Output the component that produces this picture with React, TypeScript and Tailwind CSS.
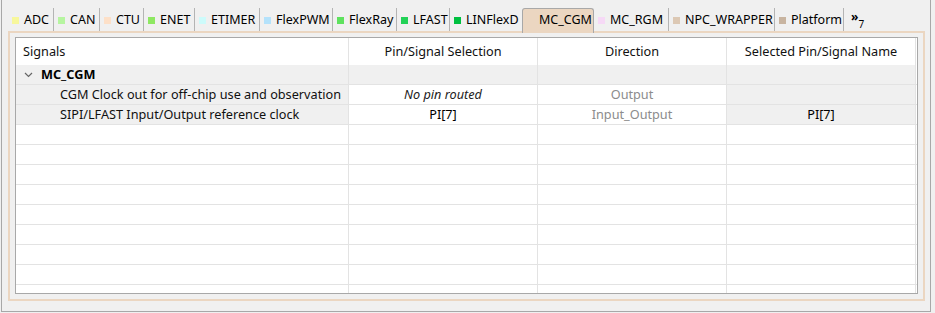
import React from 'react';

type Tab = { name: string; color: string; w: string };

const tabs: Tab[] = [
  { name: 'ADC', color: 'bg-[#f7f79c]', w: 'w-[46px]' },
  { name: 'CAN', color: 'bg-[#b6f5a0]', w: 'w-[46px]' },
  { name: 'CTU', color: 'bg-[#fde0c8]', w: 'w-[44px]' },
  { name: 'ENET', color: 'bg-[#8ee862]', w: 'w-[51px]' },
  { name: 'ETIMER', color: 'bg-[#cdfbfb]', w: 'w-[65px]' },
  { name: 'FlexPWM', color: 'bg-[#b4e2fb]', w: 'w-[73px]' },
  { name: 'FlexRay', color: 'bg-[#5ee25e]', w: 'w-[64px]' },
  { name: 'LFAST', color: 'bg-[#22d257]', w: 'w-[53px]' },
  { name: 'LINFlexD', color: 'bg-[#00c040]', w: 'w-[72px]' },
];

const tabsAfter: Tab[] = [
  { name: 'MC_RGM', color: 'bg-[#f6d9f6]', w: 'w-[75px]' },
  { name: 'NPC_WRAPPER', color: 'bg-[#dcc8b4]', w: 'w-[106px]' },
  { name: 'Platform', color: 'bg-[#c8b4a0]', w: 'w-[69px]' },
];

const TabItem = ({ tab, last }: { tab: Tab; last?: boolean }) => (
  <div
    className={`${tab.w} h-[23px] flex items-center pl-1 gap-[5px] whitespace-nowrap ${last ? '' : 'border-r border-[#b4b4b4]'}`}
  >
    <span className={`w-[7px] h-[7px] shrink-0 mt-[1px] ${tab.color}`} />
    <span className="text-[#000] leading-none mt-[1px]">{tab.name}</span>
  </div>
);

const Chevron = () => (
  <svg width="9" height="6" viewBox="0 0 9 6" className="text-[#666]">
    <path d="M1 1l3.5 3.5L8 1" fill="none" stroke="currentColor" strokeWidth="1.2" />
  </svg>
);

const Cell = ({
  w,
  bg,
  className,
  children,
}: {
  w: string;
  bg?: string;
  className?: string;
  children?: React.ReactNode;
}) => (
  <div className={`${w} h-full flex items-center whitespace-nowrap border-r border-[#e3e3e3] ${bg ?? 'bg-white'} ${className ?? ''}`}>
    {children}
  </div>
);

const Row = ({ children }: { children: React.ReactNode }) => (
  <div className="flex h-[20px] border-b border-[#e3e3e3] shrink-0">{children}</div>
);

export default function App() {
  const emptyRows = Array.from({ length: 9 });
  return (
    <div
      className="w-[935px] h-[313px] bg-[#f0f0f0] text-[12.7px] overflow-hidden"
      style={{ fontFamily: '"Noto Sans", "Open Sans", sans-serif' }}
    >
      <div className="ml-[1px] w-[930px] h-[312px] border-x border-b border-[#a8a8a8] pl-[6px]">
        {/* tab strip */}
        <div className="flex items-end pt-[8px] h-[31px] text-[12.5px]">
          {tabs.map((t, i) => (
            <TabItem key={t.name} tab={t} last={i === tabs.length - 1} />
          ))}
          <div className="relative z-10 w-[72px] h-[25px] -mb-[2px] pb-[1px] flex items-center pl-1 gap-[5px] bg-[#ebd6c1] border border-b-0 border-[#a8a8a8] rounded-t-[3px]">
            <span className="w-[7px] h-[7px] shrink-0 bg-[#ebd6c1]" />
            <span className="leading-none text-[#000]">MC_CGM</span>
          </div>
          {tabsAfter.map((t) => (
            <TabItem key={t.name} tab={t} />
          ))}
          <div className="h-[23px] pl-[7px] flex items-start pt-[3px] text-[#000]">
            <span className="text-[12px] leading-none font-bold">»</span>
            <span className="text-[10px] leading-none mt-[8px]">7</span>
          </div>
        </div>

        {/* panel */}
        <div className="w-[917px] h-[270px] border-2 border-[#ebd6c1] bg-[#f0f0f0] pl-[5px] pt-[4px]">
          <div className="w-[903px] h-[257px] border border-[#a8a8a8] bg-white overflow-hidden flex flex-col">
            <div className="flex h-[27px] shrink-0 text-[#111]">
              <Cell w="w-[333px]" className="pl-[7px] pt-[1px]">Signals</Cell>
              <Cell w="w-[189px]" className="justify-center pt-[1px]">Pin/Signal Selection</Cell>
              <Cell w="w-[189px]" className="justify-center pt-[1px]">Direction</Cell>
              <Cell w="w-[189px]" className="justify-center pt-[1px]">Selected Pin/Signal Name</Cell>
            </div>

            <Row>
              <Cell w="w-[333px]" bg="bg-[#f0f0f0]" className="pl-[8px] gap-[8px]">
                <Chevron />
                <span className="font-bold text-[#000]">MC_CGM</span>
              </Cell>
              <Cell w="w-[189px]" bg="bg-[#f0f0f0]" />
              <Cell w="w-[189px]" bg="bg-[#f0f0f0]" />
              <Cell w="w-[189px]" bg="bg-[#f0f0f0]" />
            </Row>

            <Row>
              <Cell w="w-[333px]" bg="bg-[#f0f0f0]" className="pl-[44px] text-[#111]">
                CGM Clock out for off-chip use and observation
              </Cell>
              <Cell w="w-[189px]" className="justify-center italic text-[#222]">No pin routed</Cell>
              <Cell w="w-[189px]" className="justify-center text-[#8c8c8c]">Output</Cell>
              <Cell w="w-[189px]" bg="bg-[#f0f0f0]" />
            </Row>

            <Row>
              <Cell w="w-[333px]" bg="bg-[#f0f0f0]" className="pl-[44px] text-[#111]">
                SIPI/LFAST Input/Output reference clock
              </Cell>
              <Cell w="w-[189px]" className="justify-center text-[#000]">PI[7]</Cell>
              <Cell w="w-[189px]" className="justify-center text-[#8c8c8c]">Input_Output</Cell>
              <Cell w="w-[189px]" bg="bg-[#f0f0f0]" className="justify-center text-[#000]">PI[7]</Cell>
            </Row>

            {emptyRows.map((_, i) => (
              <Row key={i}>
                <Cell w="w-[333px]" />
                <Cell w="w-[189px]" />
                <Cell w="w-[189px]" />
                <Cell w="w-[189px]" />
              </Row>
            ))}
          </div>
        </div>
      </div>
    </div>
  );
}
